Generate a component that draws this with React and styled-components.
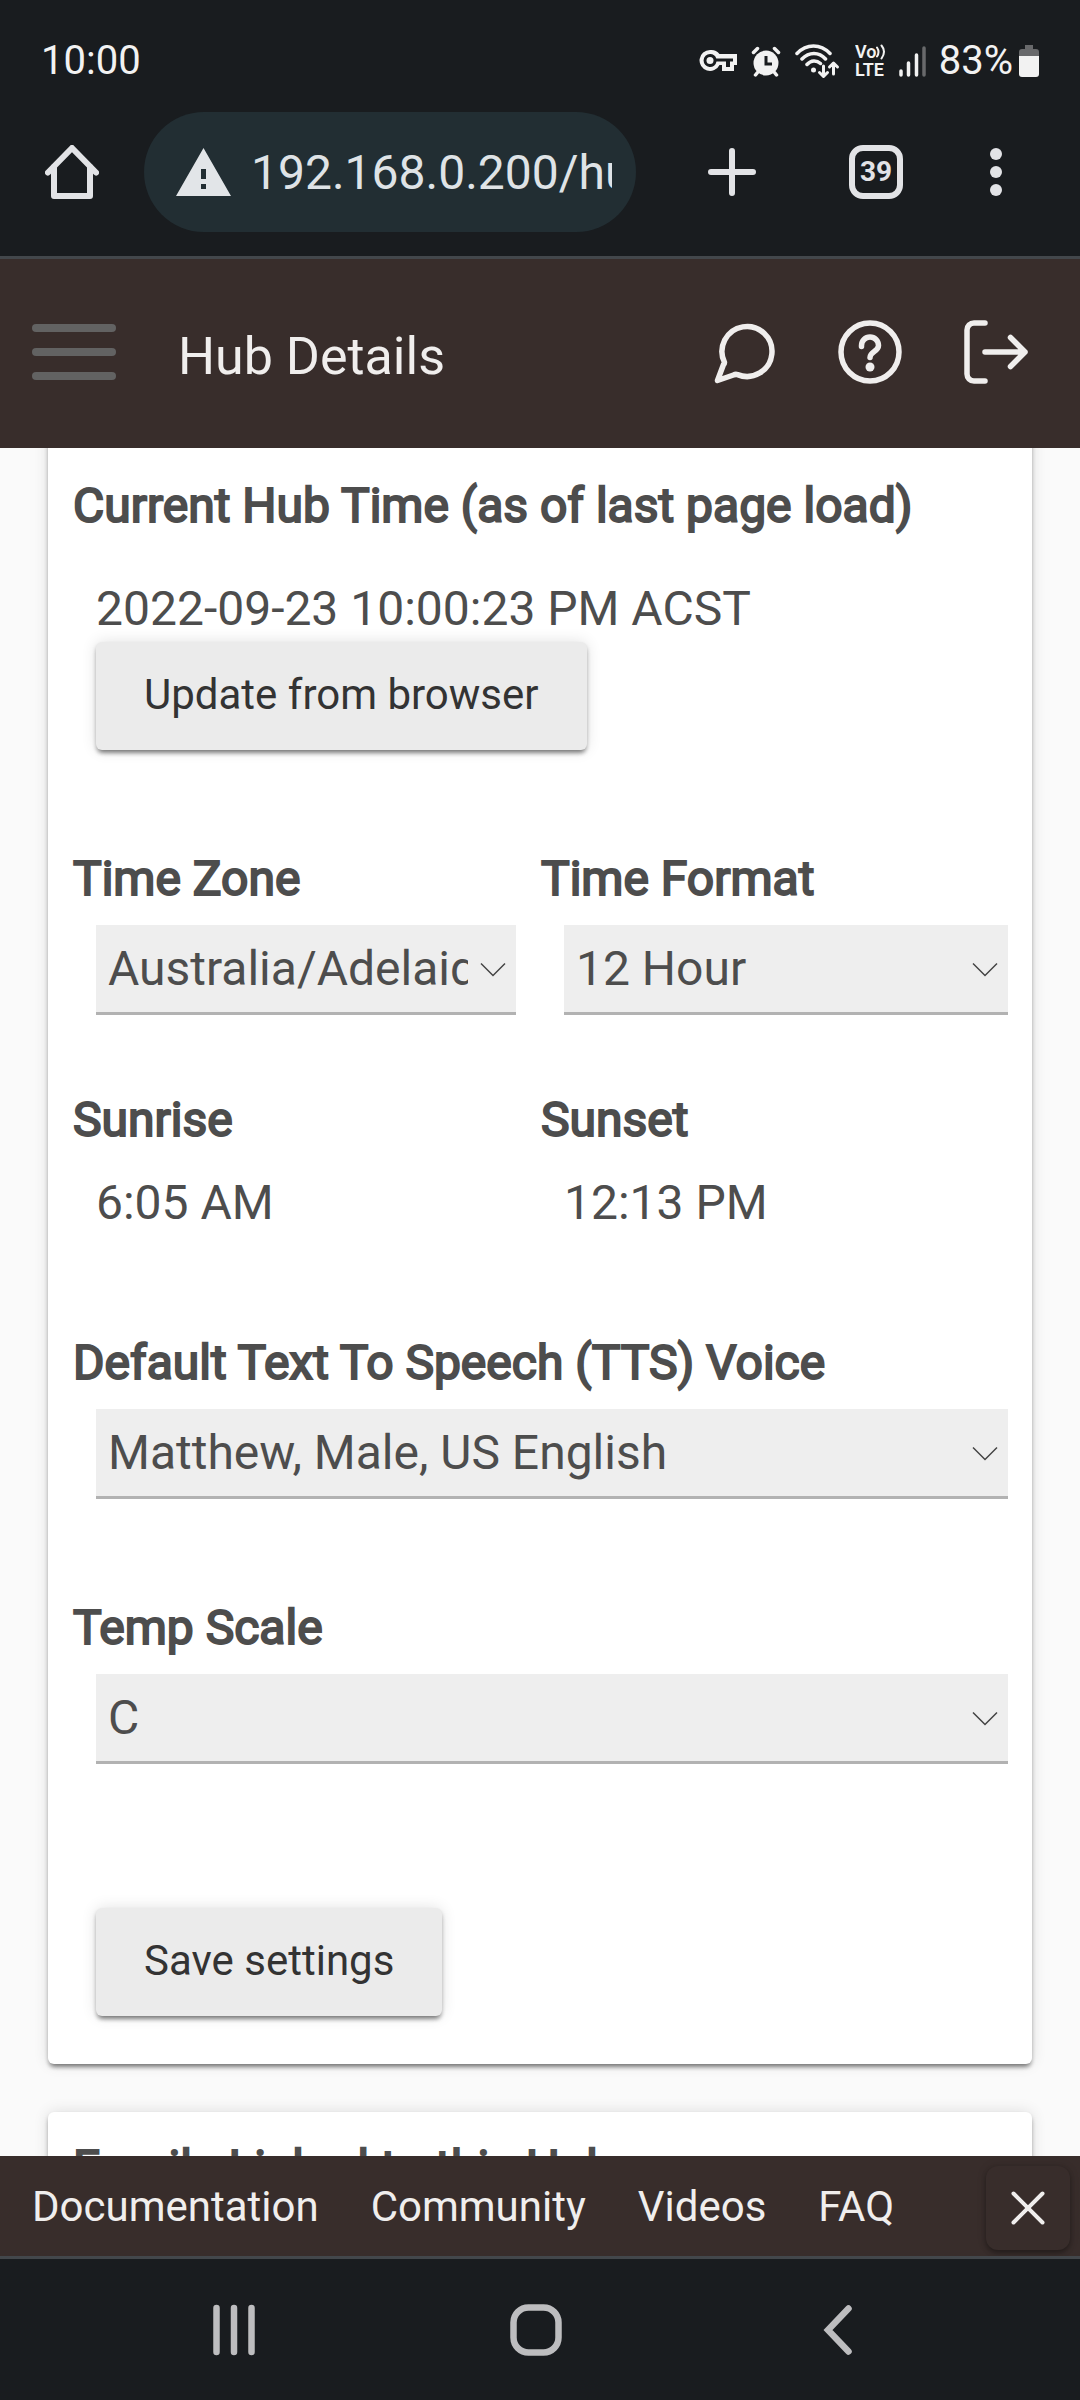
import React from "react";
import styled, { createGlobalStyle } from "styled-components";

const chrome = "#191c1f";
const brand = "#382d2b";
const brandText = "#f0eeed";
const ink = "#4d4d4d";
const raised =
  "0 5px 5px -3px rgba(0,0,0,.4), 0 0 15px rgba(0,0,0,.12), 0 3px 4px rgba(0,0,0,.22)";

const GlobalStyle = createGlobalStyle`
  *, *::before, *::after { box-sizing: border-box; }
  body { margin: 0; background: ${chrome}; font-family: Roboto, "Liberation Sans", sans-serif; }
  button, input, select { font-family: inherit; }
  svg { display: block; flex: none; }
`;

const Screen = styled.div`
  display: flex;
  flex-direction: column;
  height: 100vh;
  color: ${ink};
`;

const StatusBar = styled.div`
  display: flex;
  align-items: center;
  justify-content: space-between;
  height: 112px;
  padding: 10px 41px 0;
  background: ${chrome};
  color: #f2f2f2;
  font-size: 40px;
  line-height: 48px;
`;

const StatusIcons = styled.div`
  display: flex;
  align-items: center;
  gap: 12px;
`;

const Battery = styled.div`
  display: flex;
  align-items: center;
  gap: 6px;
`;

const Toolbar = styled.div`
  display: flex;
  align-items: center;
  padding: 0 36px 24px 0;
  background: ${chrome};
  border-bottom: 3px solid #43474b;
`;

const ToolButton = styled.button`
  display: flex;
  align-items: center;
  justify-content: center;
  width: ${(p) => (p.$narrow ? "96px" : "144px")};
  height: 120px;
  padding: 0;
  border: 0;
  background: none;
  color: #e2e3e6;
`;

const TabCount = styled.span`
  display: flex;
  align-items: center;
  justify-content: center;
  width: 54px;
  height: 54px;
  border: 6px solid currentColor;
  border-radius: 14px;
  font-size: 28px;
  font-weight: 700;
  line-height: 32px;
`;

const AddressBar = styled.label`
  display: flex;
  flex: 1;
  align-items: center;
  gap: 20px;
  min-width: 0;
  height: 120px;
  margin-right: 24px;
  padding: 0 24px 0 32px;
  border-radius: 60px;
  background: #222e33;
`;

const AddressInput = styled.input`
  flex: 1;
  min-width: 0;
  padding: 2px 0 0;
  border: 0;
  outline: 0;
  background: none;
  color: #dfe3e6;
  font-size: 48px;
  line-height: 56px;
`;

const AppHeader = styled.header`
  display: flex;
  align-items: center;
  gap: 62px;
  height: 189px;
  padding: 0 52px 4px 32px;
  background: ${brand};
  color: ${brandText};
`;

const AppTitle = styled.h1`
  flex: 1;
  margin: 10px 0 0;
  font-size: 52px;
  font-weight: 400;
  line-height: 64px;
`;

const IconButton = styled.button`
  display: flex;
  padding: 0;
  border: 0;
  background: none;
  color: inherit;
`;

const MenuIcon = styled.span`
  display: flex;
  flex-direction: column;
  gap: 16px;
  width: 84px;

  i {
    height: 8px;
    border-radius: 4px;
    background: #626262;
  }
`;

const Content = styled.main`
  flex: 1;
  min-height: 0;
  overflow-y: auto;
  scrollbar-width: none;
  padding: 0 48px;
  background: #fafafa;
`;

const Card = styled.section`
  margin-top: ${(p) => (p.$scrolled ? "-24px" : "48px")};
  padding: ${(p) => (p.$scrolled ? "54px" : "28px")} 24px 48px;
  border-radius: 6px;
  background: #fff;
  box-shadow: ${raised};
`;

const Columns = styled.div`
  display: grid;
  grid-template-columns: 1fr 1fr;
  margin-top: ${(p) => p.$space};
`;

const Field = styled.div`
  margin-top: ${(p) => p.$space || 0};
  padding-right: ${(p) => (p.$inset ? "24px" : 0)};
  min-width: 0;
`;

const Label = styled.label`
  display: block;
  padding-left: 1px;
  font-size: 48px;
  line-height: 56px;
  -webkit-text-stroke: 2px ${ink};
`;

const Value = styled.div`
  margin-top: ${(p) => p.$space};
  padding-left: 24px;
  font-size: 48px;
  line-height: 56px;
`;

const SelectBox = styled.div`
  display: grid;
  align-items: center;
  margin: 18px 0 0 24px;

  > * {
    grid-area: 1 / 1;
  }

  svg {
    justify-self: end;
    margin-right: 9px;
    pointer-events: none;
  }
`;

const Select = styled.select`
  appearance: none;
  width: 100%;
  min-width: 0;
  height: 90px;
  padding: 0 48px 0 12px;
  border: 0;
  border-bottom: 3px solid #b2b2b2;
  border-radius: 0;
  background: #eee;
  color: ${ink};
  font-size: 48px;
  line-height: 56px;
`;

const ActionButton = styled.button`
  display: block;
  height: 108px;
  margin: ${(p) => p.$space} 0 0 24px;
  padding: 0 48px 2px;
  border: 0;
  border-radius: 6px;
  background: #ebebeb;
  color: #333;
  font-size: 42px;
  line-height: 48px;
  box-shadow: ${raised};
`;

const LinkBar = styled.footer`
  display: flex;
  align-items: center;
  gap: 52px;
  height: 100px;
  padding: 2px 10px 0 32px;
  background: ${brand};
`;

const FooterLink = styled.a`
  color: ${brandText};
  font-size: 42px;
  line-height: 48px;
  text-decoration: none;
`;

const CloseButton = styled.button`
  display: flex;
  align-items: center;
  justify-content: center;
  width: 84px;
  height: 84px;
  margin: 2px 0 0 auto;
  padding: 0;
  border: 0;
  border-radius: 12px;
  background: ${brand};
  color: ${brandText};
  box-shadow: 0 3px 5px rgba(0, 0, 0, 0.3), 0 0 10px rgba(0, 0, 0, 0.15);
`;

const SystemNav = styled.nav`
  display: flex;
  height: 144px;
  padding: 0 91px 0 83px;
  border-top: 3px solid #43474b;
  background: ${chrome};
`;

const NavButton = styled.button`
  display: flex;
  flex: 1;
  align-items: center;
  justify-content: center;
  padding: 0;
  border: 0;
  background: none;
  color: #bdbdbf;
`;

const line = {
  fill: "none",
  stroke: "currentColor",
  strokeLinecap: "round",
  strokeLinejoin: "round",
};

const KeyIcon = () => (
  <svg width="40" height="32" viewBox="0 0 40 32">
    <path
      fill="currentColor"
      fillRule="evenodd"
      d="M11 5a10.500 10.500 0 1 0 9.500 15h2.500v6h12v-6h3V9H20.500A10.500 10.500 0 0 0 11 5Zm0 4a6.500 6.500 0 0 1 6.300 4.500H34v3h-3v5.500h-4v-5.500h-9.500A6.500 6.500 0 1 1 11 9Z"
    />
    <circle cx="11" cy="15.500" r="3.500" fill="currentColor" />
  </svg>
);

const AlarmIcon = () => (
  <svg width="32" height="32" viewBox="0 0 32 32">
    <circle cx="15" cy="18" r="12.500" fill="currentColor" />
    <path {...line} strokeWidth="3.500" d="M2.500 7.500 6.500 3.500M27.500 7.500l-4-4M6.500 27.500l-2 2.500M23.500 27.500l2 2.500" />
    <path d="M15 11v8h6" fill="none" stroke={chrome} strokeWidth="3" />
  </svg>
);

const WifiIcon = () => (
  <svg width="48" height="36" viewBox="0 0 48 36">
    <path
      {...line}
      strokeWidth="3.500"
      d="M2 10.500C11.500.500 25.500.500 35 10.500M7 16C14 8.500 24 8.500 30.500 16M12 21.500c4-4.500 9.500-4.500 13.500-1"
    />
    <circle cx="18.500" cy="27" r="2.500" fill="currentColor" />
    <path {...line} strokeWidth="3" d="M28.500 23v10M24.500 29.500l4 4 4-4M38.500 31V20.500M34.500 24l4-4 4 4" />
  </svg>
);

const VolteIcon = () => (
  <svg width="32" height="36" viewBox="0 0 32 36" fontFamily="Roboto, sans-serif" fontWeight="600" fill="currentColor">
    <text x="0" y="15" fontSize="18">Vo</text>
    <text x="0" y="33" fontSize="18">LTE</text>
    <path {...line} strokeWidth="2" d="M22 4.500q3 4.500 0 9M26.500 2.500q5 6 0 13" />
  </svg>
);

const SignalIcon = () => (
  <svg width="28" height="32" viewBox="0 0 28 32">
    <path {...line} strokeWidth="3.500" d="M2 26v4M9.500 18v12M17.500 10v20" />
    <path {...line} stroke="#68696b" strokeWidth="3.500" d="M25 3v27" />
  </svg>
);

const BatteryIcon = () => (
  <svg width="20" height="32" viewBox="0 0 20 32">
    <path fill="#68696b" d="M6 0h8v4h3a3 3 0 0 1 3 3v5H0V7a3 3 0 0 1 3-3h3Z" />
    <path fill="currentColor" d="M0 11h20v18a3 3 0 0 1-3 3H3a3 3 0 0 1-3-3Z" />
  </svg>
);

const HomeIcon = () => (
  <svg width="54" height="54" viewBox="0 0 54 54">
    <path {...line} strokeWidth="6" d="M3 27.500 27 3l24 24.500" />
    <path {...line} strokeWidth="6" d="M9 22v29h36V22" />
  </svg>
);

const WarningIcon = () => (
  <svg width="55" height="48" viewBox="0 0 55 48">
    <path fill="#e2e5e8" fillRule="evenodd" d="M27.500 0 55 48H0ZM25 21v10h5V21Zm0 15v5h5v-5Z" />
  </svg>
);

const PlusIcon = () => (
  <svg width="48" height="48" viewBox="0 0 48 48">
    <path {...line} strokeWidth="6" d="M24 3v42M3 24h42" />
  </svg>
);

const DotsIcon = () => (
  <svg width="12" height="48" viewBox="0 0 12 48" fill="currentColor">
    <circle cx="6" cy="6" r="6" />
    <circle cx="6" cy="24" r="6" />
    <circle cx="6" cy="42" r="6" />
  </svg>
);

const ChatIcon = () => (
  <svg width="64" height="64" viewBox="0 0 64 64">
    <path {...line} strokeWidth="5.500" d="M12.500 42.400A25 25 0 1 1 25.500 54.600Q23.500 54 21.500 55L5.500 60.500l6-16Q12.500 43.500 12.500 42.400Z" />
  </svg>
);

const HelpIcon = () => (
  <svg width="64" height="64" viewBox="0 0 64 64">
    <circle {...line} strokeWidth="5.500" cx="32" cy="32" r="29" />
    <path {...line} strokeWidth="5.500" d="M23.500 26.500v-1a8.500 8.500 0 0 1 17 0c0 6-8.500 6-8.500 12" />
    <circle cx="32" cy="47" r="4.500" fill="currentColor" />
  </svg>
);

const ExitIcon = () => (
  <svg width="64" height="64" viewBox="0 0 64 64">
    <path {...line} strokeWidth="5.500" d="M21 3H10a7 7 0 0 0-7 7v44a7 7 0 0 0 7 7h11M21 32h40M46.500 17.500 61 32 46.500 46.500" />
  </svg>
);

const ChevronDown = () => (
  <svg width="28" height="16" viewBox="0 0 28 16">
    <path d="M2 1.500 14 13.500 26 1.500" fill="none" stroke="#444" strokeWidth="1.500" />
  </svg>
);

const CloseIcon = () => (
  <svg width="34" height="34" viewBox="0 0 34 34">
    <path {...line} strokeWidth="4" d="M2.500 2.500l29 29M31.500 2.500l-29 29" />
  </svg>
);

function SelectField({ id, label, value, inset, space }) {
  return (
    <Field $inset={inset} $space={space}>
      <Label htmlFor={id}>{label}</Label>
      <SelectBox>
        <Select id={id} defaultValue={value}>
          <option>{value}</option>
        </Select>
        <ChevronDown />
      </SelectBox>
    </Field>
  );
}

const links = ["Documentation", "Community", "Videos", "FAQ"];

export default function App() {
  return (
    <Screen>
      <GlobalStyle />
      <StatusBar>
        <span>10:00</span>
        <StatusIcons>
          <KeyIcon />
          <AlarmIcon />
          <WifiIcon />
          <VolteIcon />
          <SignalIcon />
          <Battery>
            <span>83%</span>
            <BatteryIcon />
          </Battery>
        </StatusIcons>
      </StatusBar>
      <Toolbar>
        <ToolButton aria-label="Home"><HomeIcon /></ToolButton>
        <AddressBar>
          <WarningIcon />
          <AddressInput type="text" aria-label="Address" defaultValue="192.168.0.200/hub" />
        </AddressBar>
        <ToolButton aria-label="New tab"><PlusIcon /></ToolButton>
        <ToolButton aria-label="Tabs"><TabCount>39</TabCount></ToolButton>
        <ToolButton $narrow aria-label="More"><DotsIcon /></ToolButton>
      </Toolbar>
      <AppHeader>
        <IconButton aria-label="Menu">
          <MenuIcon><i /><i /><i /></MenuIcon>
        </IconButton>
        <AppTitle>Hub Details</AppTitle>
        <IconButton aria-label="Messages"><ChatIcon /></IconButton>
        <IconButton aria-label="Help"><HelpIcon /></IconButton>
        <IconButton aria-label="Log out"><ExitIcon /></IconButton>
      </AppHeader>
      <Content>
        <Card $scrolled>
          <Label as="div">Current Hub Time (as of last page load)</Label>
          <Value $space="47px">2022-09-23 10:00:23 PM ACST</Value>
          <ActionButton $space="5px">Update from browser</ActionButton>
          <Columns $space="101px">
            <SelectField id="zone" label="Time Zone" value="Australia/Adelaide" inset />
            <SelectField id="format" label="Time Format" value="12 Hour" />
          </Columns>
          <Columns $space="77px">
            <Field>
              <Label as="div">Sunrise</Label>
              <Value $space="27px">6:05 AM</Value>
            </Field>
            <Field>
              <Label as="div">Sunset</Label>
              <Value $space="27px">12:13 PM</Value>
            </Field>
          </Columns>
          <SelectField id="voice" label="Default Text To Speech (TTS) Voice" value="Matthew, Male, US English" space="104px" />
          <SelectField id="scale" label="Temp Scale" value="C" space="101px" />
          <ActionButton $space="144px">Save settings</ActionButton>
        </Card>
        <Card>
          <Label as="div">Emails Linked to this Hub</Label>
        </Card>
      </Content>
      <LinkBar>
        {links.map((name) => (
          <FooterLink key={name} href="#">{name}</FooterLink>
        ))}
        <CloseButton aria-label="Close"><CloseIcon /></CloseButton>
      </LinkBar>
      <SystemNav>
        <NavButton aria-label="Recent apps">
          <svg width="48" height="52" viewBox="0 0 48 52">
            <path {...line} strokeWidth="6.500" d="M6.500 4v44M24 4v44M41.500 4v44" />
          </svg>
        </NavButton>
        <NavButton aria-label="Home screen">
          <svg width="52" height="52" viewBox="0 0 52 52">
            <rect {...line} strokeWidth="6.500" x="3.500" y="3.500" width="45" height="45" rx="15" />
          </svg>
        </NavButton>
        <NavButton aria-label="Back">
          <svg width="30" height="52" viewBox="0 0 30 52">
            <path {...line} strokeLinejoin="miter" strokeWidth="6.500" d="M25.500 4.500 5 26l20.500 21.500" />
          </svg>
        </NavButton>
      </SystemNav>
    </Screen>
  );
}
